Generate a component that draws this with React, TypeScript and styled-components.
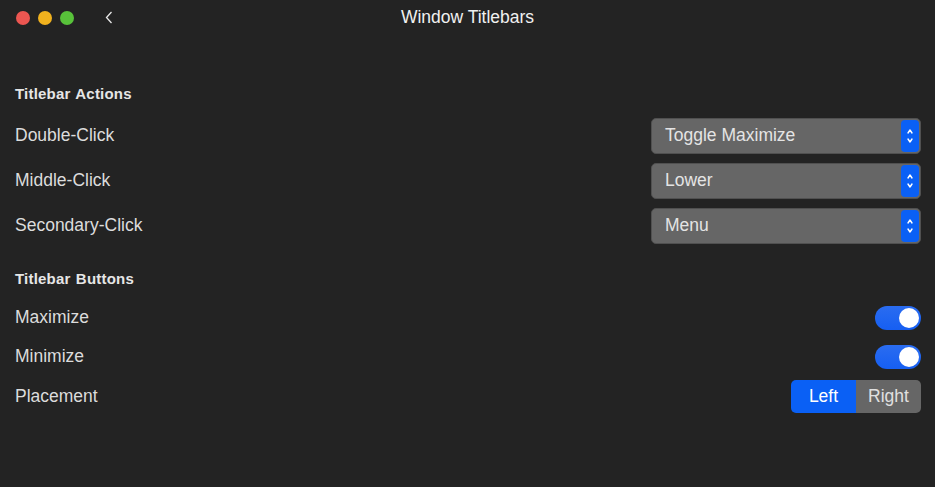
import styled, {createGlobalStyle} from 'styled-components';
import React, {useState} from 'react';

const Global = createGlobalStyle`
  *, *::before, *::after {
    box-sizing: border-box;
  }
  html, body {
    margin: 0;
    padding: 0;
    background: #232323;
  }
  body {
    font-family: "Liberation Sans", Arial, sans-serif;
    color: #e2e2e2;
  }
`

const Window = styled.div`
  width: 935px;
  height: 487px;
  background: #232323;
  display: flex;
  flex-direction: column;
`

const TitleBar = styled.header`
  height: 35px;
  display: grid;
  grid-template-columns: 1fr auto 1fr;
  align-items: center;
  padding: 0 16px;
`

const Lights = styled.div`
  display: flex;
  align-items: center;
  gap: 8px;
`

const Light = styled.span<{color: string}>`
  width: 14px;
  height: 14px;
  border-radius: 50%;
  background: ${p => p.color};
`

const BackButton = styled.button`
  margin-left: 22px;
  border: none;
  background: none;
  padding: 0;
  width: 10px;
  height: 16px;
  display: flex;
  align-items: center;
  justify-content: center;
`

const Title = styled.h1`
  margin: 0;
  font-size: 17.5px;
  font-weight: normal;
  color: #f0f0f0;
`

const Content = styled.main`
  padding: 49px 14px 0 15px;
  display: flex;
  flex-direction: column;
`

const Heading = styled.h2<{gap: number}>`
  margin: 0 0 ${p => p.gap}px 0;
  font-size: 15px;
  line-height: 20px;
  font-weight: bold;
  letter-spacing: 0.2px;
  word-spacing: 1px;
  color: #e6e6e6;
`

const Row = styled.div<{h: number}>`
  height: ${p => p.h}px;
  display: flex;
  align-items: center;
  justify-content: space-between;
`

const Label = styled.span`
  font-size: 17.5px;
  color: #dcdcdc;
`

const Select = styled.div`
  width: 270px;
  height: 36px;
  background: #666666;
  border: 1px solid #505050;
  border-radius: 5px;
  display: flex;
  align-items: center;
  justify-content: space-between;
  padding: 0 1px 0 13px;
`

const SelectText = styled.span`
  font-size: 17.5px;
  color: #e4e4e4;
`

const Stepper = styled.span`
  width: 18px;
  height: 32px;
  border-radius: 4px;
  background: #0a60f5;
  display: flex;
  align-items: center;
  justify-content: center;
`

const Switch = styled.button<{on: boolean}>`
  width: 46px;
  height: 24px;
  border: none;
  border-radius: 12px;
  padding: 2px;
  background: ${p => p.on ? 'linear-gradient(180deg, #2a6cf0, #165ff2)' : '#555'};
  display: flex;
  justify-content: ${p => p.on ? 'flex-end' : 'flex-start'};
  cursor: pointer;
`

const Knob = styled.span`
  width: 20px;
  height: 20px;
  border-radius: 50%;
  background: #ffffff;
`

const Segmented = styled.div`
  display: flex;
  height: 33px;
  border-radius: 5px;
  overflow: hidden;
`

const Segment = styled.button<{active: boolean}>`
  width: 65px;
  border: none;
  font-family: "Liberation Sans", Arial, sans-serif;
  font-size: 17.5px;
  color: ${p => p.active ? '#ffffff' : '#e0e0e0'};
  background: ${p => p.active ? '#0a60f5' : '#666666'};
  cursor: pointer;
`

const Chevrons = () => (
    <svg width="10" height="22" viewBox="0 0 10 22" fill="none" stroke="#fff" strokeWidth="1.4" strokeLinecap="round" strokeLinejoin="round">
        <polyline points="3,8 5,5 7,8"/>
        <polyline points="3,14 5,17 7,14"/>
    </svg>
)

const PopUp: React.FC<{value: string}> = ({value}) => (
    <Select>
        <SelectText>{value}</SelectText>
        <Stepper><Chevrons/></Stepper>
    </Select>
)

const Toggle: React.FC<{initial: boolean}> = ({initial}) => {
    const [on, setOn] = useState(initial)
    return <Switch on={on} onClick={() => setOn(!on)}><Knob/></Switch>
}

const App: React.FC = () => {
    const [placement, setPlacement] = useState('Left')
    return (
        <Window>
            <Global/>
            <TitleBar>
                <Lights>
                    <Light color="#ec5651"/>
                    <Light color="#f1b21e"/>
                    <Light color="#58c23a"/>
                    <BackButton>
                        <svg width="8" height="13" viewBox="0 0 8 13" fill="none" stroke="#e8e8e8" strokeWidth="1.3">
                            <polyline points="6.5,1 1.5,6.5 6.5,12"/>
                        </svg>
                    </BackButton>
                </Lights>
                <Title>Window Titlebars</Title>
                <div/>
            </TitleBar>
            <Content>
                <Heading gap={9}>Titlebar Actions</Heading>
                <Row h={45}><Label>Double-Click</Label><PopUp value="Toggle Maximize"/></Row>
                <Row h={45}><Label>Middle-Click</Label><PopUp value="Lower"/></Row>
                <Row h={45}><Label>Secondary-Click</Label><PopUp value="Menu"/></Row>
                <Heading gap={9} style={{marginTop: 21}}>Titlebar Buttons</Heading>
                <Row h={39}><Label>Maximize</Label><Toggle initial={true}/></Row>
                <Row h={39}><Label>Minimize</Label><Toggle initial={true}/></Row>
                <Row h={41}>
                    <Label>Placement</Label>
                    <Segmented>
                        {['Left', 'Right'].map(s =>
                            <Segment key={s} active={placement === s} onClick={() => setPlacement(s)}>{s}</Segment>
                        )}
                    </Segmented>
                </Row>
            </Content>
        </Window>
    )
}
export default App
